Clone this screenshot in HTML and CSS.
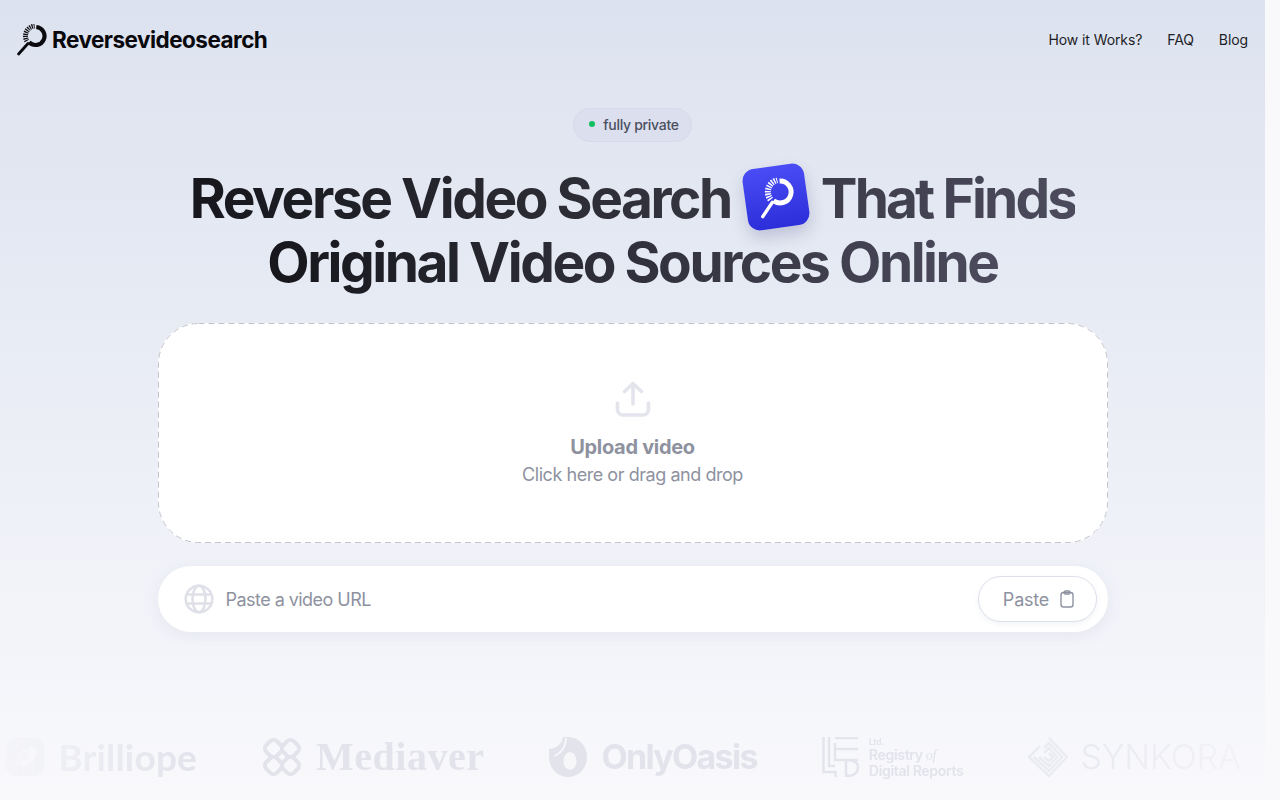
FILE: index.html
```html
<!DOCTYPE html>
<html lang="en">
<head>
    <meta charset="UTF-8">
    <title>Reverse Video Search</title>
    <link rel="stylesheet" href="styles.css">
</head>
<body>
    <div class="page">
        <header class="topbar">
            <a href="#" class="brand">
                <svg class="brand-icon" viewBox="0 0 30 32" fill="none" stroke="#0b0b0f">
                    <path d="M19.3 3.03A9 9 0 1 1 12.14 18.36" stroke-width="4.2"/>
                    <path d="M9.84 17A10 10 0 0 1 17.6 2.04" stroke-width="5" stroke-dasharray="1.2 .9"/>
                    <path d="M11 19.500 1.600 30" stroke-width="2.800" stroke-linecap="round"/>
                </svg>
                <span>Reversevideosearch</span>
            </a>
            <nav class="nav">
                <a href="#">How it Works?</a>
                <a href="#">FAQ</a>
                <a href="#">Blog</a>
            </nav>
        </header>

        <main class="hero">
            <div class="badge"><i class="badge-dot"></i>fully private</div>
            <h1 class="title">
                <span class="title-line"><span class="grad grad-one">Reverse Video Search</span>
                    <span class="app-icon">
                        <svg viewBox="0 0 30 32" fill="none" stroke="#fff">
                            <path d="M19.3 3.03A9 9 0 1 1 12.14 18.36" stroke-width="4"/>
                            <path d="M9.84 17A10 10 0 0 1 17.6 2.04" stroke-width="5" stroke-dasharray="1.2 .9"/>
                            <path d="M11 19.500 1.600 30" stroke-width="2.800" stroke-linecap="round"/>
                        </svg>
                    </span>
                    <span class="grad grad-two">That Finds</span></span>
                <span class="title-line"><span class="grad grad-three">Original Video Sources Online</span></span>
            </h1>

            <div class="dropzone">
                <svg class="dash-line" viewBox="0 0 950 220" fill="none">
                    <rect x="0.500" y="0.500" width="949" height="219" rx="40" stroke="#c2c3cc" stroke-dasharray="6 4"/>
                </svg>
                <svg class="upload-icon" viewBox="0 0 36 36" fill="none" stroke="#e4e5ec" stroke-width="3.600" stroke-linecap="round" stroke-linejoin="round">
                    <path d="M18 23V3M9.500 10.500 18 2.500l8.500 8"/>
                    <path d="M2.500 22v6.500a5.500 5.500 0 0 0 5.500 5.500h20a5.500 5.500 0 0 0 5.500-5.500V22"/>
                </svg>
                <div class="drop-title">Upload video</div>
                <div class="drop-sub">Click here or drag and drop</div>
            </div>

            <div class="urlbar">
                <svg class="globe" viewBox="0 0 30 30" fill="none" stroke="#dfe0e8" stroke-width="2.600">
                    <circle cx="15" cy="15" r="13.300"/>
                    <ellipse cx="15" cy="15" rx="6.500" ry="13.300"/>
                    <path d="M2.800 10.500h24.400M2.800 19.500h24.400"/>
                </svg>
                <span class="url-text">Paste a video URL</span>
                <button class="paste-btn">Paste
                    <svg viewBox="0 0 16 18" fill="none" stroke="#8f93a1" stroke-width="1.400">
                        <rect x="2" y="2.500" width="12" height="14.500" rx="2.500"/>
                        <rect x="5" y="1" width="6" height="3" rx="1.500"/>
                    </svg>
                </button>
            </div>
        </main>

        <section class="logos">
            <div class="logo">
                <svg class="logo-mark" viewBox="0 0 38 40">
                    <rect x="0" y="1" width="38" height="38" rx="9" fill="#e9eaf0"/>
                    <path d="M30 11c2 10-5 18-14 18-5 0-8-3-9-6 5 3 15 2 17-4 1-3 0-6-2-8 3-1 6-1 8 0z" fill="#f8f8fb"/>
                    <circle cx="19" cy="19" r="5" fill="none" stroke="#f8f8fb" stroke-width="2"/>
                </svg>
                <span class="logo-name name-brilliope">Brilliope</span>
            </div>
            <div class="logo">
                <svg class="logo-mark logo-mark-wide" viewBox="0 0 40 40" fill="none" stroke="#e2e3eb" stroke-width="4">
                    <rect x="4" y="4" width="15" height="15" rx="5" transform="rotate(45 11.500 11.500)"/>
                    <rect x="21" y="4" width="15" height="15" rx="5" transform="rotate(45 28.500 11.500)"/>
                    <rect x="4" y="21" width="15" height="15" rx="5" transform="rotate(45 11.500 28.500)"/>
                    <rect x="21" y="21" width="15" height="15" rx="5" transform="rotate(45 28.500 28.500)"/>
                </svg>
                <span class="logo-name name-mediaver">Mediaver</span>
            </div>
            <div class="logo">
                <svg class="logo-mark" viewBox="0 0 38 40">
                    <path d="M14 0h5c11 0 19 9 19 20s-8 20-19 20S0 31 0 20v-8c7 0 13-5 14-12z" fill="#e2e3eb"/>
                    <path d="M17 1c0 8-4 14-11 18" fill="none" stroke="#f7f7fa" stroke-width="2"/>
                    <ellipse cx="21" cy="24" rx="6.500" ry="9" fill="#f7f7fa"/>
                </svg>
                <span class="logo-name name-oasis">OnlyOasis</span>
            </div>
            <div class="logo logo-tight">
                <svg class="logo-mark" viewBox="0 0 38 40" fill="none" stroke="#e4e5ec" stroke-width="2.500">
                    <path d="M1.500 0v35h12v5M7 0v29h6M13 1h23M13 6v17h23M13 12h23M24 23v16c8 0 12-3 12-9 0-5-4-7-12-7"/>
                </svg>
                <div class="registry">
                    <small>Ltd.</small>
                    <span>Registry <em>of</em></span>
                    <span>Digital Reports</span>
                </div>
            </div>
            <div class="logo logo-wide">
                <svg class="logo-mark logo-mark-wide" viewBox="0 0 40 40" fill="none" stroke="#e6e7ee" stroke-width="2.500">
                    <path d="M21 1 39 20 21 39 1 20 12 9M6 20l15 14 13-14L21 6l-5 5M11 20l10 9 8-9-8-9-5 5M16 20l5 4 4-4-4-4"/>
                </svg>
                <span class="logo-name name-synkora">SYNKORA</span>
            </div>
        </section>
    </div>
    <div class="scroll-strip"></div>
</body>
</html>
```

FILE: styles.css
```css
* {
    box-sizing: border-box;
}

html, body {
    height: 100%;
}

body {
    margin: 0;
    display: flex;
    overflow: hidden;
    font-family: Inter, "Liberation Sans", sans-serif;
    background-color: #f9f9fc;
}

a {
    color: inherit;
    text-decoration: none;
}

.page {
    flex: 1;
    min-width: 0;
    height: 800px;
    display: flex;
    flex-direction: column;
    overflow: hidden;
    background: linear-gradient(180deg, #dce2ef 0%, #f9f9fc 100%);
}

.scroll-strip {
    width: 15px;
    background-color: #f9f9fc;
}

.topbar {
    height: 78px;
    flex: none;
    padding: 0 17px;
    display: flex;
    align-items: center;
    justify-content: space-between;
}

.brand {
    display: flex;
    align-items: center;
    gap: 5px;
    color: #09090d;
    font-size: 22.500px;
    font-weight: 700;
    letter-spacing: -0.53px;
}

.brand-icon {
    width: 30px;
    height: 32px;
    margin-top: 2px;
}

.nav {
    display: flex;
    gap: 25px;
    font-size: 14px;
    letter-spacing: -0.1px;
    color: #1d1e26;
}

.hero {
    display: flex;
    flex-direction: column;
    align-items: center;
    padding-top: 30px;
}

.badge {
    height: 34px;
    padding: 0 12px 2px 15px;
    display: flex;
    align-items: center;
    gap: 8px;
    border: 1px solid #d6daea;
    border-radius: 17px;
    background-color: #dbdfee;
    color: #4b4f60;
    font-size: 14px;
    font-weight: 500;
    letter-spacing: -0.3px;
}

.badge-dot {
    width: 6px;
    height: 6px;
    border-radius: 50%;
    background-color: #0fbf62;
}

.title {
    margin: 24px 0 0;
    font-size: 55px;
    line-height: 64px;
    font-weight: 700;
    letter-spacing: -2.450px;
    text-align: center;
}

.title-line {
    display: flex;
    justify-content: center;
    align-items: center;
    gap: 14px;
}

.grad {
    background-clip: text;
    -webkit-background-clip: text;
    color: transparent;
}

.grad-one {
    background-image: linear-gradient(90deg, #16161c, #363641);
}

.grad-two {
    background-image: linear-gradient(90deg, #3c3c4a, #4b4b5d);
    letter-spacing: -2.850px;
}

.grad-three {
    background-image: linear-gradient(90deg, #16161c, #4b4b5d);
}

.app-icon {
    width: 62px;
    height: 62px;
    margin: -4px 0 -1px;
    display: flex;
    align-items: center;
    justify-content: center;
    border-radius: 12px;
    background: linear-gradient(180deg, #4a4df5, #2c2fd9);
    box-shadow: 0 8px 16px rgba(60, 60, 120, 0.22);
    transform: rotate(-8deg);
}

.app-icon svg {
    width: 37px;
    height: 39px;
}

.dropzone {
    position: relative;
    width: 950px;
    height: 220px;
    margin-top: 29px;
    display: flex;
    flex-direction: column;
    align-items: center;
    border-radius: 40px;
    background-color: #fff;
    padding-top: 58px;
}

.dash-line {
    position: absolute;
    top: 0;
    left: 0;
    width: 950px;
    height: 220px;
}

.upload-icon {
    width: 36px;
    height: 36px;
}

.drop-title {
    margin-top: 16px;
    color: #8e929f;
    font-size: 20px;
    line-height: 28px;
    font-weight: 700;
    letter-spacing: -0.3px;
}

.drop-sub {
    color: #8e929f;
    font-size: 18px;
    line-height: 28px;
    letter-spacing: -0.45px;
}

.urlbar {
    width: 950px;
    height: 66px;
    margin-top: 23px;
    padding: 0 11px 0 26px;
    display: flex;
    align-items: center;
    border-radius: 33px;
    background-color: #fff;
    box-shadow: 0 4px 14px rgba(190, 195, 215, 0.25);
}

.globe {
    width: 30px;
    height: 30px;
}

.url-text {
    flex: 1;
    margin-left: 12px;
    color: #8e929f;
    font-size: 18px;
    letter-spacing: -0.54px;
}

.paste-btn {
    width: 119px;
    height: 46px;
    padding: 0 0 0 4px;
    display: flex;
    align-items: center;
    justify-content: center;
    gap: 10px;
    border: 1px solid #dde0ec;
    border-radius: 23px;
    background-color: #fff;
    box-shadow: 0 2px 5px rgba(190, 195, 215, 0.2);
    color: #8e929f;
    font-family: inherit;
    font-size: 18px;
    letter-spacing: -0.2px;
}

.paste-btn svg {
    width: 16px;
    height: 18px;
}

.logos {
    margin-top: auto;
    height: 84px;
    padding: 0 18px 2px 0;
    flex: none;
    display: flex;
    align-items: center;
    justify-content: center;
    gap: 65px;
    color: #e2e3eb;
    white-space: nowrap;
    -webkit-mask-image: linear-gradient(90deg, rgba(0, 0, 0, 0.15) 0, #000 15%, #000 75%, rgba(0, 0, 0, 0.25) 98%);
    mask-image: linear-gradient(90deg, rgba(0, 0, 0, 0.15) 0, #000 15%, #000 75%, rgba(0, 0, 0, 0.25) 98%);
}

.logo {
    display: flex;
    align-items: center;
    gap: 14px;
}

.logo-tight {
    gap: 9px;
}

.logo-wide {
    gap: 12px;
}

.logo-mark {
    width: 38px;
    height: 40px;
    flex: none;
}

.logo-mark-wide {
    width: 40px;
}

.logo-name {
    line-height: 40px;
}

.name-brilliope {
    font-family: Lato, sans-serif;
    font-size: 37px;
    font-weight: 700;
    letter-spacing: 0.2px;
}

.name-mediaver {
    font-family: "Liberation Serif", serif;
    font-size: 40px;
    font-weight: 700;
    letter-spacing: 0.500px;
}

.name-oasis {
    font-size: 34px;
    font-weight: 700;
    letter-spacing: -1.700px;
}

.name-synkora {
    font-size: 34px;
    font-weight: 300;
    letter-spacing: -0.1px;
}

.registry {
    display: flex;
    flex-direction: column;
    font-size: 14.200px;
    line-height: 15px;
    font-weight: 600;
    letter-spacing: -0.4px;
}

.registry small {
    font-size: 9px;
    line-height: 10px;
}

.registry em {
    font-family: "Liberation Serif", serif;
    font-weight: 400;
}
```
